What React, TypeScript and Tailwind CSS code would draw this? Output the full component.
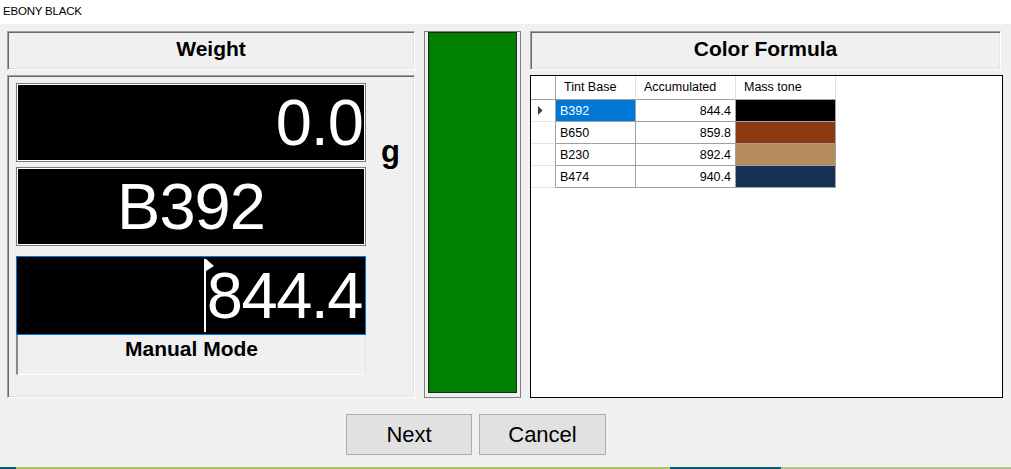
import React from "react";

const sunken =
  "border border-t-[#a0a0a0] border-l-[#a0a0a0] border-b-white border-r-white shadow-[inset_1px_1px_0_#696969,inset_-1px_-1px_0_#e3e3e3]";

const rows = [
  { base: "B392", acc: "844.4", color: "bg-[#000000]", sel: true },
  { base: "B650", acc: "859.8", color: "bg-[#8c3a12]", sel: false },
  { base: "B230", acc: "892.4", color: "bg-[#b38b5c]", sel: false },
  { base: "B474", acc: "940.4", color: "bg-[#153155]", sel: false },
];

export default function App() {
  return (
    <div
      className="w-[1011px] h-[469px] flex flex-col bg-[#f0f0f0] overflow-hidden"
      style={{ fontFamily: '"Liberation Sans", Arial, sans-serif' }}
    >
      {/* title bar */}
      <div className="h-[24px] bg-white flex items-start pl-[3px] pt-[6px] text-[11.5px] leading-none text-black shrink-0 tracking-[-0.2px]">
        EBONY BLACK
      </div>

      {/* main row */}
      <div className="flex pl-[7px] pt-[7px] gap-[9px] h-[367px] box-content shrink-0">
        {/* left column */}
        <div className="w-[408px] flex flex-col gap-[5px]">
          <div className={`${sunken} h-[39px] flex justify-center pt-[6px]`}>
            <span className="text-[21px] font-bold leading-none text-black">Weight</span>
          </div>
          <div className={`${sunken} h-[323px] flex`}>
            <div className="ml-[8px] mt-[7px] w-[350px] flex flex-col">
              {/* box 1 */}
              <div className="h-[79px] border border-[#7a7a7a] bg-white p-[1px]">
                <div className="h-full bg-black flex items-center justify-end pr-[1px]">
                  <span className="text-[65px] leading-none text-white tracking-[-1px]">0.0</span>
                </div>
              </div>
              {/* box 2 */}
              <div className="mt-[5px] h-[79px] border border-[#7a7a7a] bg-white p-[1px]">
                <div className="h-full bg-black flex items-center justify-center">
                  <span className="text-[65px] leading-none text-white tracking-[-1px]">B392</span>
                </div>
              </div>
              {/* box 3 */}
              <div className="mt-[10px] h-[79px] border border-[#0078d7] bg-black p-[1px]">
                <div className="h-full bg-black flex items-center justify-end pr-[2px]">
                  <div className="relative h-[73px] w-[2px] bg-white mr-[1px]">
                    <svg
                      className="absolute left-[2px] top-0"
                      width="9"
                      height="13"
                      viewBox="0 0 9 13"
                    >
                      <polygon points="0,0 8,7 0,12" fill="#ffffff" />
                    </svg>
                  </div>
                  <span className="text-[65px] leading-none text-white tracking-[-1.5px]">844.4</span>
                </div>
              </div>
              {/* manual mode */}
              <div className="h-[40px] border-l-2 border-l-[#8a8a8a] border-b border-b-[#ffffff] border-r border-r-[#e3e3e3] flex justify-center pt-[3px]">
                <span className="text-[21px] font-bold leading-none text-black">Manual Mode</span>
              </div>
            </div>
            <div className="ml-[15px] pt-[60px]">
              <span className="text-[31px] font-bold leading-none text-black">g</span>
            </div>
          </div>
        </div>

        {/* green column */}
        <div className="w-[97px] h-[367px] border border-[#808080] pt-0 px-[3px] pb-[4px]">
          <div className="h-full border border-[#222222] bg-[#008000]" />
        </div>

        {/* right column */}
        <div className="w-[473px] flex flex-col gap-[5px]">
          <div className={`${sunken} h-[39px] w-[471px] flex justify-center pt-[6px]`}>
            <span className="text-[21px] font-bold leading-none text-black">Color Formula</span>
          </div>
          <div className="h-[323px] border border-black bg-white">
            <div className="flex flex-col text-[12.5px] text-black">
              {/* header */}
              <div className="flex h-[24px]">
                <div className="w-[25px] border-r border-r-[#a0a0a0] border-b border-b-[#a0a0a0]" />
                <div className="w-[80px] border-r border-r-[#e0e0e0] border-b border-b-[#a0a0a0] flex items-center pl-[8px] text-[12.5px]">
                  Tint Base
                </div>
                <div className="w-[100px] border-r border-r-[#e0e0e0] border-b border-b-[#a0a0a0] flex items-center pl-[8px] text-[12.5px]">
                  Accumulated
                </div>
                <div className="w-[100px] border-r border-r-[#e0e0e0] border-b border-b-[#a0a0a0] flex items-center pl-[8px] text-[12.5px]">
                  Mass tone
                </div>
              </div>
              {rows.map((r) => (
                <div key={r.base} className="flex h-[22px]">
                  <div className="w-[25px] border-r border-r-[#a0a0a0] border-b border-b-[#e3e3e3] flex items-center pl-[7px]">
                    {r.sel && (
                      <svg width="5" height="9" viewBox="0 0 5 9">
                        <polygon points="0,0 4.5,4.5 0,9" fill="#3c3c3c" />
                      </svg>
                    )}
                  </div>
                  <div
                    className={`w-[80px] border-r border-r-[#a0a0a0] border-b border-b-[#a0a0a0] flex items-center pl-[4px] pt-[2px] ${
                      r.sel ? "bg-[#0078d7] text-white" : ""
                    }`}
                  >
                    {r.base}
                  </div>
                  <div className="w-[100px] border-r border-r-[#a0a0a0] border-b border-b-[#a0a0a0] flex items-center justify-end pr-[4px] pt-[2px]">
                    {r.acc}
                  </div>
                  <div className={`w-[100px] border-r border-r-[#a0a0a0] border-b border-b-[#a0a0a0] ${r.color}`} />
                </div>
              ))}
            </div>
          </div>
        </div>
      </div>

      {/* buttons */}
      <div className="flex pl-[346px] pt-[16px] gap-[7px] shrink-0">
        <button className="w-[126px] h-[41px] bg-[#e1e1e1] border border-[#adadad] text-[22px] text-black leading-none flex items-center justify-center">
          Next
        </button>
        <button className="w-[127px] h-[41px] bg-[#e1e1e1] border border-[#adadad] text-[22px] text-black leading-none flex items-center justify-center">
          Cancel
        </button>
      </div>

      <div className="flex-1" />
      {/* bottom strip */}
      <div className="h-[2px] flex shrink-0">
        <div className="w-[16px] bg-[#0b5a78]" />
        <div className="w-[654px] bg-[#a9c860]" />
        <div className="w-[111px] bg-[#0b5a78]" />
        <div className="flex-1 bg-[#b7c48c]" />
      </div>
    </div>
  );
}
